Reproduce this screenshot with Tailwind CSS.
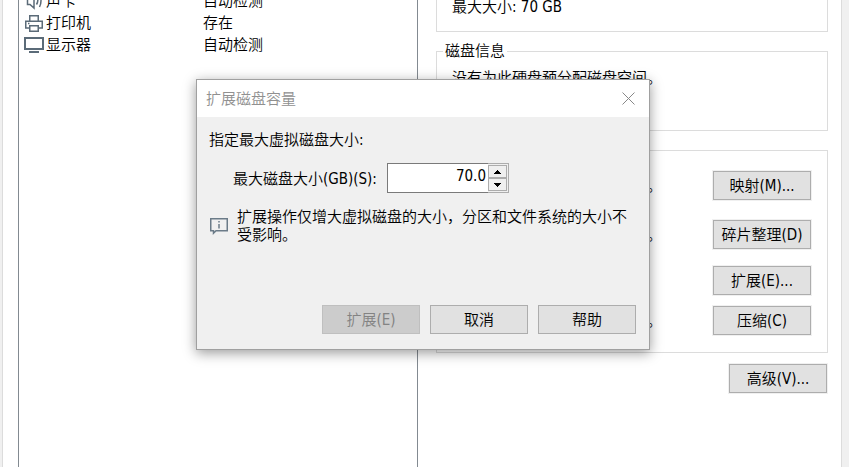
<!DOCTYPE html>
<html lang="zh-CN">
<head>
  <meta charset="UTF-8">
  <meta name="viewport" content="width=device-width, initial-scale=1.0">
  <title>扩展磁盘容量</title>
  <script src="https://cdn.jsdelivr.net/npm/@tailwindcss/browser@4"></script>
</head>
<body class="bg-[#f0f0f0] font-['DejaVu_Sans_Condensed','Noto_Sans_CJK_SC',sans-serif] text-[15px] font-[350] leading-[18px] text-black">
  <div class="relative flex h-screen overflow-hidden pl-0.5 pr-[7px]">
    <main class="flex flex-1 border-x border-[#dcdcdc] bg-white pl-[15px]">

      <!-- hardware list -->
      <section class="w-[400px] shrink-0 border-x border-[#838a91]">
        <table class="-mt-2.5 w-full">
          <tbody>
            <tr class="h-[22px]">
              <td class="w-[184px] pl-[5px]">
                <div class="flex items-center gap-0.5">
                  <svg class="h-5 w-5" viewBox="0 0 20 20" fill="none" stroke="#5b6b78" stroke-width="1.5">
                    <path d="M3.500 6H6l4-4v15l-4-3.500H3.500zM12.500 5.500c1.500 2 1.500 5.500 0 8M15.500 4c2 3 2 8.500 0 12"/>
                  </svg>
                  <span>声卡</span>
                </div>
              </td>
              <td>自动检测</td>
            </tr>
            <tr class="h-[22px]">
              <td class="pl-[5px]">
                <div class="flex items-center gap-0.5">
                  <svg class="h-5 w-5" viewBox="0 0 20 20" fill="none" stroke="#5b6b78" stroke-width="1.5">
                    <path d="M5.750 8V2.750h8.500V8M5.500 15H1.750V8.250h16.500V15H14.500M5.750 12.750h8.500v5.500h-8.500z"/>
                    <path d="M4 10.500h1.500"/>
                  </svg>
                  <span>打印机</span>
                </div>
              </td>
              <td>存在</td>
            </tr>
            <tr class="h-[22px]">
              <td class="pl-[5px]">
                <div class="flex items-center gap-0.5">
                  <svg class="h-5 w-5" viewBox="0 0 20 20" fill="none" stroke="#5b6b78">
                    <path d="M1 3h18v11H1z" stroke="#5b6b78" stroke-width="2"/>
                    <path d="M5 17h10" stroke-width="2"/>
                  </svg>
                  <span>显示器</span>
                </div>
              </td>
              <td>自动检测</td>
            </tr>
          </tbody>
        </table>
      </section>

      <!-- disk settings -->
      <section class="flex-1 pl-[18px] pr-[13px]">
        <div class="-mt-0.5 h-[34px] border border-t-0 border-[#dcdcdc] pl-[15px]">
          <p>最大大小: 70 GB</p>
        </div>

        <fieldset class="mt-[10px] h-[89px] border border-[#dcdcdc] pl-[15px]">
          <legend class="-ml-[9px] px-0.5">磁盘信息</legend>
          <p class="mt-[9px]">没有为此硬盘预分配磁盘空间。</p>
        </fieldset>

        <div class="mt-[19px] h-[203px] border border-[#dcdcdc] pl-[15px] pr-4 pt-5">
          <div class="flex items-center justify-between">
            <p>将该虚拟机磁盘映射到本地卷。</p>
            <button class="h-[29px] w-[98px] border border-[#adadad] bg-[#e1e1e1] ring-1 ring-[#f0f0f0]">映射(M)...</button>
          </div>
          <div class="mt-5 flex items-center justify-between">
            <p>整理文件碎片并整合可用空间。</p>
            <button class="h-[29px] w-[98px] border border-[#adadad] bg-[#e1e1e1] ring-1 ring-[#f0f0f0]">碎片整理(D)</button>
          </div>
          <div class="mt-[17px] flex items-center justify-between">
            <p>扩展磁盘容量。</p>
            <button class="h-[29px] w-[98px] border border-[#adadad] bg-[#e1e1e1] ring-1 ring-[#f0f0f0]">扩展(E)...</button>
          </div>
          <div class="mt-[11px] flex items-center justify-between">
            <p>压缩磁盘以回收未使用的空间。</p>
            <button class="h-[29px] w-[98px] border border-[#adadad] bg-[#e1e1e1] ring-1 ring-[#f0f0f0]">压缩(C)</button>
          </div>
        </div>

        <div class="mt-[11px] flex justify-end pr-px">
          <button class="h-[29px] w-[98px] border border-[#adadad] bg-[#e1e1e1] ring-1 ring-[#f0f0f0]">高级(V)...</button>
        </div>
      </section>
    </main>

    <!-- expand dialog -->
    <div role="dialog" aria-labelledby="title" class="absolute left-[196px] top-[79px] w-[454px] border border-[#a0a0a0] bg-[#f0f0f0] shadow-[0_3px_12px_rgba(0,0,0,0.4)]">
      <div class="flex h-[37px] items-center justify-between bg-white pl-[9px] pr-[14px]">
        <h1 id="title" class="font-[350] text-[#909090]">扩展磁盘容量</h1>
        <button aria-label="关闭">
          <svg class="h-[13px] w-[13px]" viewBox="0 0 13 13" fill="none" stroke="#888888">
            <path d="M.5.5l12 12M12.500.5l-12 12"/>
          </svg>
        </button>
      </div>

      <div class="px-3 pb-[15px] pt-[14px]">
        <p>指定最大虚拟磁盘大小:</p>

        <div class="mt-[14px] flex items-center pl-6">
          <label for="size" class="w-[154px] pt-0.5">最大磁盘大小(GB)(S):</label>
          <div class="flex h-[30px] w-[122px] border border-[#7a7a7a] bg-white">
            <input id="size" type="text" value="70.0" class="h-6 w-[100px] pr-0.5 text-right outline-none">
            <div class="-my-px -mr-px flex w-[21px] flex-col border border-l-0 border-[#adadad] bg-[#f0f0f0] py-px pr-px">
              <button aria-label="增加" class="flex flex-1 items-center justify-center border border-[#adadad]">
                <svg class="h-1 w-[7px]" viewBox="0 0 7 4" shape-rendering="crispEdges"><path d="M3 0h1v1h1v1h1v1h1v1H0V3h1V2h1V1h1z"/></svg>
              </button>
              <button aria-label="减少" class="flex flex-1 items-center justify-center border border-[#adadad]">
                <svg class="h-1 w-[7px]" viewBox="0 0 7 4" shape-rendering="crispEdges"><path d="M0 0h7v1H6v1H5v1H4v1H3V3H2V2H1V1H0z"/></svg>
              </button>
            </div>
          </div>
        </div>

        <div class="mt-[15px] flex items-center gap-2">
          <svg class="h-5 w-5 shrink-0" viewBox="0 0 20 20" fill="none" stroke="#6b7b88" stroke-width="1.500">
            <path d="M1.750 2.750h16.500v12H7l-2.500 2.500v-2.500H1.750z"/>
            <path d="M10 5v1.500M10 8v4.500"/>
          </svg>
          <p>扩展操作仅增大虚拟磁盘的大小，分区和文件系统的大小不受影响。</p>
        </div>

        <div class="mt-[61px] flex justify-end gap-[10px] pr-px">
          <button disabled class="h-[29px] w-[98px] border border-[#bfbfbf] bg-[#cccccc] text-[#838383]">扩展(E)</button>
          <button class="h-[29px] w-[98px] border border-[#adadad] bg-[#e1e1e1]">取消</button>
          <button class="h-[29px] w-[98px] border border-[#adadad] bg-[#e1e1e1]">帮助</button>
        </div>
      </div>
    </div>
  </div>
</body>
</html>
